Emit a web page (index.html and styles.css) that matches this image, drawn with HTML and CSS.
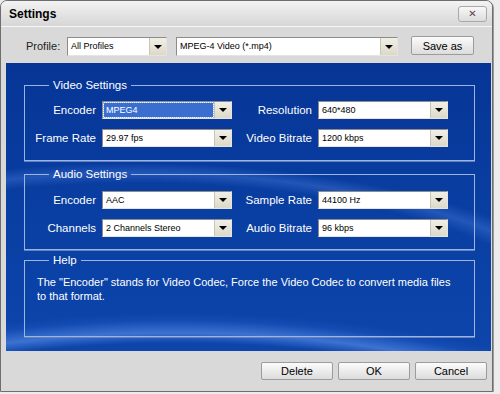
FILE: index.html
```html
<!DOCTYPE html>
<html lang="en">
<head>
  <meta charset="UTF-8">
  <title>Settings</title>
  <link rel="stylesheet" href="styles.css">
</head>
<body>

  <div class="window">
    <div class="titlebar">
      <span class="title">Settings</span>
      <button class="close">&#x2715;</button>
    </div>

    <div class="client">
      <!-- Profile row -->
      <div class="profile-row">
        <span class="profile-label">Profile:</span>
        <div class="combo combo-profile"><span class="value">All Profiles</span><span class="arrow"></span></div>
        <div class="combo combo-format"><span class="value">MPEG-4 Video (*.mp4)</span><span class="arrow"></span></div>
        <button class="btn btn-save">Save as</button>
      </div>

      <!-- Blue settings panel -->
      <div class="panel">
        <fieldset class="group video">
          <legend>Video Settings</legend>
          <div class="grid">
            <label>Encoder</label>
            <div class="combo"><span class="value selected">MPEG4</span><span class="arrow"></span></div>
            <label>Resolution</label>
            <div class="combo"><span class="value">640*480</span><span class="arrow"></span></div>
            <label>Frame Rate</label>
            <div class="combo"><span class="value">29.97 fps</span><span class="arrow"></span></div>
            <label>Video Bitrate</label>
            <div class="combo"><span class="value">1200 kbps</span><span class="arrow"></span></div>
          </div>
        </fieldset>

        <fieldset class="group audio">
          <legend>Audio Settings</legend>
          <div class="grid">
            <label>Encoder</label>
            <div class="combo"><span class="value">AAC</span><span class="arrow"></span></div>
            <label>Sample Rate</label>
            <div class="combo"><span class="value">44100 Hz</span><span class="arrow"></span></div>
            <label>Channels</label>
            <div class="combo"><span class="value">2 Channels Stereo</span><span class="arrow"></span></div>
            <label>Audio Bitrate</label>
            <div class="combo"><span class="value">96 kbps</span><span class="arrow"></span></div>
          </div>
        </fieldset>

        <fieldset class="group help">
          <legend>Help</legend>
          <p class="help-text">The "Encoder" stands for Video Codec, Force the Video Codec to convert media files<br>to that format.</p>
        </fieldset>
      </div>

      <!-- Dialog buttons -->
      <div class="footer">
        <button class="btn btn-footer">Delete</button>
        <button class="btn btn-footer">OK</button>
        <button class="btn btn-footer">Cancel</button>
      </div>
    </div>
  </div>

</body>
</html>
```

FILE: styles.css
```css
body {
  margin: 0;
  background-color: #ececec;
  font-family: "Liberation Sans", Arial, sans-serif;
  font-size: 11px;
  color: #000;
}

.window {
  width: 493px;
  height: 392px;
  box-sizing: border-box;
  border: 1px solid #6e6e6e;
  border-radius: 7px 7px 0 0;
  background-color: #d9d9d9;
  display: flex;
  flex-direction: column;
  overflow: hidden;
  box-shadow: 1px 1px 0 #9a9a9a;
}

/* Title bar */
.titlebar {
  height: 25px;
  display: flex;
  align-items: center;
  padding: 0 5px 0 8px;
  background: linear-gradient(#f3f3f3, #e6e6e6 45%, #d6d6d6);
  border-bottom: 1px solid #f7f7f7;
}

.title {
  font-weight: bold;
  font-size: 12px;
}

.close {
  margin-left: auto;
  width: 29px;
  height: 16px;
  padding: 0;
  border: 1px solid #a8a8a8;
  border-radius: 3px;
  background: linear-gradient(#f8f8f8, #dcdcdc);
  color: #5b4646;
  font-family: "DejaVu Sans", sans-serif;
  font-size: 10px;
  font-weight: bold;
  line-height: 14px;
}

.client {
  flex: 1;
  display: flex;
  flex-direction: column;
  padding: 0 1px 0 5px;
}

/* Profile row */
.profile-row {
  height: 36px;
  box-sizing: border-box;
  padding: 10px 0 0 20px;
  display: flex;
  align-items: flex-start;
}

.profile-label {
  width: 41px;
  line-height: 19px;
  color: #222;
}

.combo-profile {
  width: 100px;
  height: 19px !important;
}

.combo-format {
  width: 222px;
  height: 19px !important;
  margin-left: 9px;
}

.btn-save {
  width: 63px;
  height: 19px;
  margin-left: 13px;
  margin-top: -1px;
}

/* Combo boxes */
.combo {
  height: 18px;
  box-sizing: border-box;
  display: flex;
  color: #000;
  background-color: #fff;
  border: 1px solid;
  border-color: #8c8c8c #e4e4e4 #e4e4e4 #8c8c8c;
}

.combo .value {
  flex: 1;
  margin: 1px;
  padding-left: 2px;
  font-size: 9px;
  line-height: 14px;
  white-space: nowrap;
  overflow: hidden;
}

.combo .value.selected {
  background-color: #3a6fd0;
  color: #fff;
  outline: 1px dotted #9ab8ee;
}

.combo .arrow {
  width: 16px;
  position: relative;
  background: linear-gradient(#f2f0e6, #dcd9c8);
  border-left: 1px solid #c8c5b4;
}

.combo .arrow::after {
  content: "";
  position: absolute;
  left: 4px;
  top: 50%;
  margin-top: -2px;
  border-left: 4px solid transparent;
  border-right: 4px solid transparent;
  border-top: 4px solid #000;
}

/* Buttons */
.btn {
  padding: 0;
  font-family: "Liberation Sans", Arial, sans-serif;
  font-size: 11px;
  color: #000;
  border: 1px solid #9c9c9c;
  border-radius: 2px;
  background: linear-gradient(#fbfbfb, #ececec 50%, #dcdcdc);
  cursor: pointer;
}

/* Blue panel */
.panel {
  height: 288px;
  box-sizing: border-box;
  padding: 15px 16px 0 18px;
  background:
    radial-gradient(ellipse 620px 250px at 170px 500px, transparent 88%, rgba(120, 170, 255, 0.45) 92%, rgba(60, 120, 230, 0.15) 97%, transparent 100%),
    radial-gradient(ellipse 520px 200px at 130px 300px, transparent 90%, rgba(110, 160, 250, 0.25) 95%, transparent 100%),
    linear-gradient(#063596, #0a40a4 60%, #0d45ab);
  color: #fff;
}

.group {
  margin: 0;
  padding: 9px 0 13px 0;
  border: 1px solid #9db4df;
  box-shadow: 0 1px 0 #5d82c8;
}

.group legend {
  margin-left: 24px;
  padding: 0 4px;
  font-size: 11.5px;
  line-height: 14px;
}

.audio {
  margin-top: 6px;
  padding-top: 10px;
  padding-bottom: 12px;
}

.help {
  margin-top: 3px;
  padding: 0;
}

.grid {
  display: grid;
  grid-template-columns: 71px 130px 74px 130px;
  grid-auto-rows: 18px;
  column-gap: 6px;
  row-gap: 10px;
}

.grid label {
  text-align: right;
  line-height: 18px;
  font-size: 11.5px;
  white-space: nowrap;
}

.help-text {
  margin: 0;
  height: 61px;
  padding: 8px 0 0 12px;
  line-height: 14px;
  white-space: nowrap;
}

/* Footer */
.footer {
  flex: 1;
  display: flex;
  justify-content: flex-end;
  gap: 5px;
  padding: 11px 4px 0 0;
}

.btn-footer {
  width: 72px;
  height: 18px;
}
```
